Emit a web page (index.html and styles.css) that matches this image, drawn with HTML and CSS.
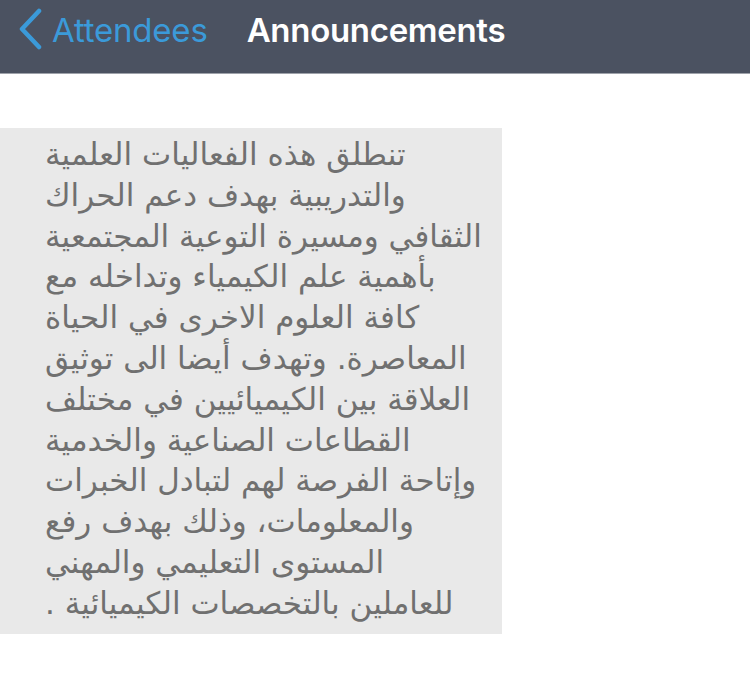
FILE: index.html
```html
<!DOCTYPE html>
<html lang="en">
<head>
<meta charset="utf-8">
<link rel="stylesheet" href="styles.css">
</head>
<body>
<header class="navbar">
  <a class="back">
    <svg class="chev" width="26" height="42" viewBox="0 0 26 42"><path d="M22 3 L5 21 L22 39" fill="none" stroke="#3b9ad9" stroke-width="4.5" stroke-linecap="round" stroke-linejoin="round"/></svg>
    <span class="back-label">Attendees</span>
  </a>
  <h1 class="title">Announcements</h1>
</header>
<main class="content">
  <div class="announcement" dir="rtl" lang="ar">تنطلق هذه الفعاليات العلمية<br>والتدريبية بهدف دعم الحراك<br>الثقافي ومسيرة التوعية المجتمعية<br>بأهمية علم الكيمياء وتداخله مع<br>كافة العلوم الاخرى في الحياة<br>المعاصرة. وتهدف أيضا الى توثيق<br>العلاقة بين الكيميائيين في مختلف<br>القطاعات الصناعية والخدمية<br>وإتاحة الفرصة لهم لتبادل الخبرات<br>والمعلومات، وذلك بهدف رفع<br>المستوى التعليمي والمهني<br>للعاملين بالتخصصات الكيميائية .</div>
</main>
</body>
</html>
```
FILE: styles.css
```css
html, body {
  margin: 0;
  padding: 0;
  background: #ffffff;
}
body {
  width: 750px;
  height: 688px;
  overflow: hidden;
  font-family: "Liberation Sans", Arial, sans-serif;
}
.navbar {
  height: 59px;
  padding: 0 0 14px 17px;
  background: #4b5261;
  border-bottom: 1px solid #9ea2aa;
  display: flex;
  align-items: center;
  box-sizing: content-box;
}
.back {
  display: flex;
  align-items: center;
  gap: 9px;
  color: #3b9ad9;
}
.chev {
  display: block;
  margin-top: -2px;
}
.back-label {
  font-size: 33px;
  font-family: "Inter", "Liberation Sans", sans-serif;
  font-weight: 400;
  letter-spacing: -0.2px;
}
.title {
  margin: 0 0 0 39px;
  font-family: "Inter", "Liberation Sans", sans-serif;
  font-size: 33px;
  font-weight: 600;
  color: #ffffff;
  letter-spacing: -0.3px;
}
.content {
  padding-top: 54px;
}
.announcement {
  width: 502px;
  height: 506px;
  box-sizing: border-box;
  background: #e9e9e9;
  color: #707070;
  font-family: "DejaVu Sans", sans-serif;
  font-size: 31px;
  line-height: 40.8px;
  text-align: left;
  padding: 6px 10px 0 45px;
}
```
